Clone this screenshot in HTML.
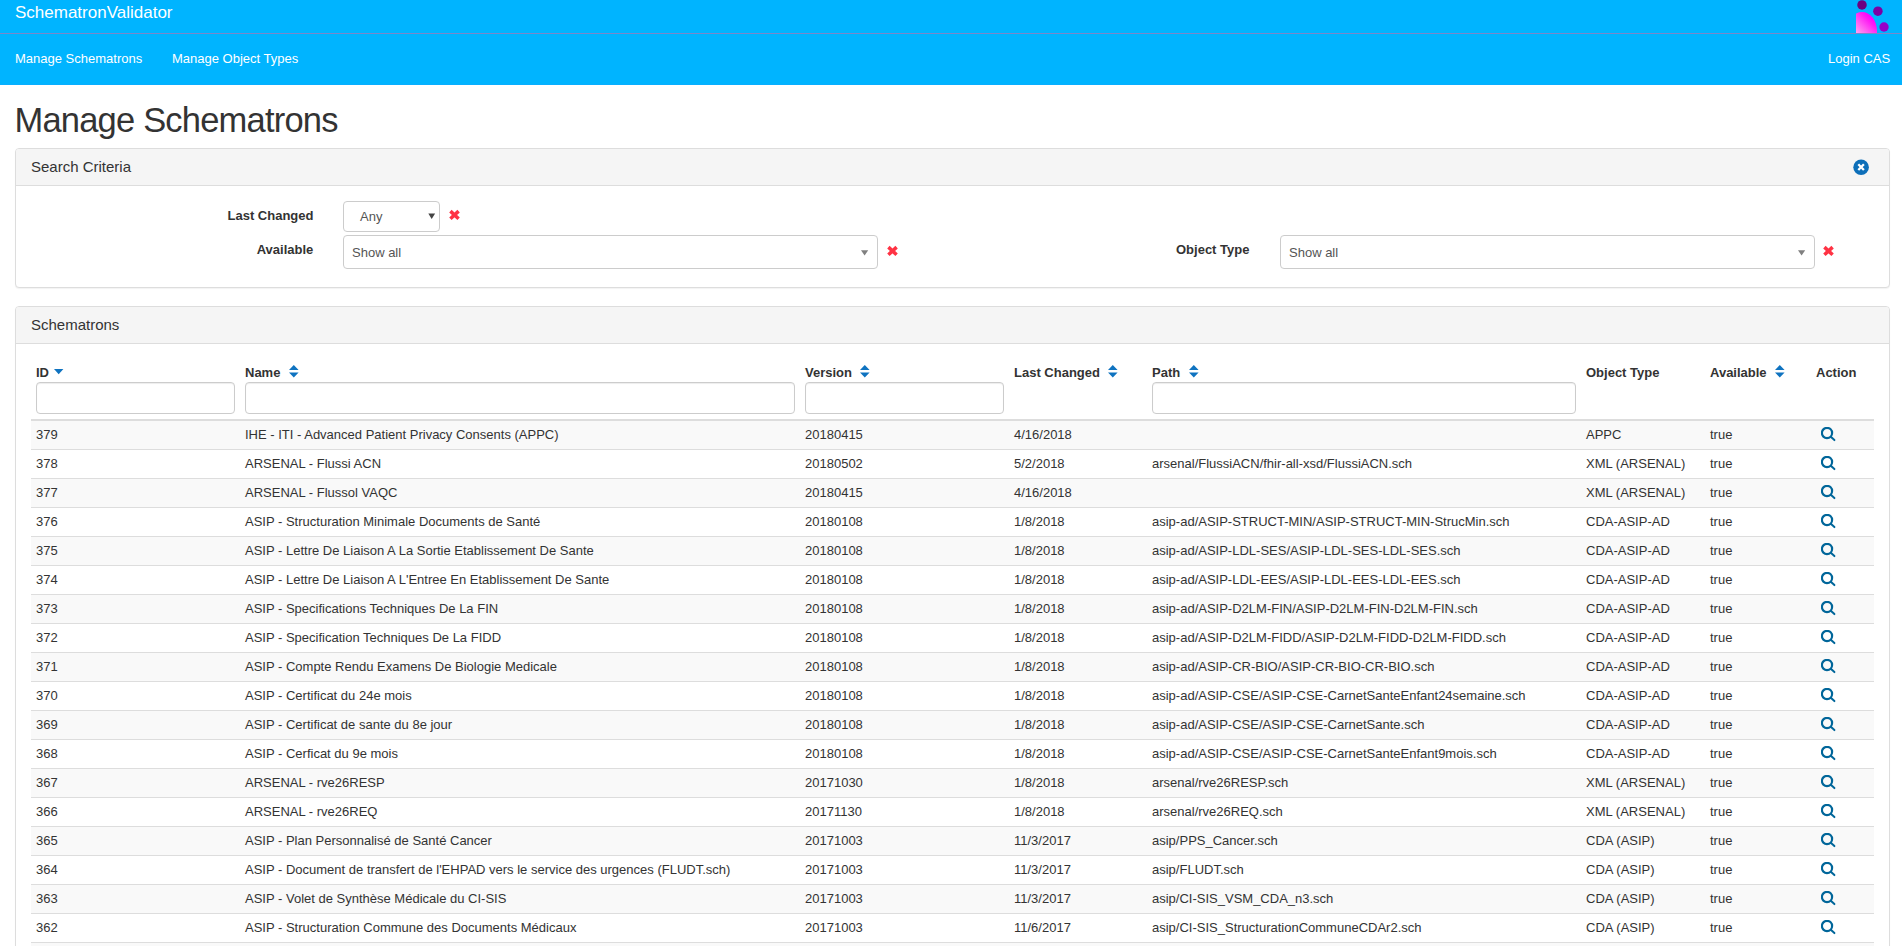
<!DOCTYPE html>
<html><head><meta charset="utf-8">
<style>
*{box-sizing:border-box;}
html,body{margin:0;padding:0;}
body{font-family:"Liberation Sans",sans-serif;font-size:13px;color:#333;background:#fff;width:1902px;height:946px;overflow:hidden;position:relative;}
.nav{position:absolute;left:0;top:0;width:1902px;height:85px;background:#00b4ff;}
.nav .dv{position:absolute;left:0;top:33px;width:1902px;height:1px;background:#7b87c9;}
.nav .bot{position:absolute;left:0;top:84px;width:1902px;height:1px;background:#0aaeff;}
.brand{position:absolute;left:15px;top:3px;font-size:17px;line-height:20px;color:#fff;}
.nl{position:absolute;top:50px;font-size:13px;line-height:18px;color:#fff;}
.logo{position:absolute;left:1846px;top:0;}
h1{position:absolute;left:14.5px;top:100px;margin:0;font-size:34.5px;letter-spacing:-0.8px;font-weight:normal;line-height:40px;color:#333;white-space:nowrap;}
.panel{position:absolute;left:15px;width:1875px;border:1px solid #ddd;border-radius:4px;background:#fff;box-shadow:0 1px 1px rgba(0,0,0,.05);}
.ph{height:37px;background:#f5f5f5;border-bottom:1px solid #ddd;border-radius:3px 3px 0 0;position:relative;}
.ph span{position:absolute;left:15px;top:9px;font-size:15px;line-height:18px;color:#333;}
.lbl{position:absolute;font-weight:bold;font-size:13px;line-height:18px;color:#333;text-align:right;white-space:nowrap;}
.sel{position:absolute;border:1px solid #ccc;border-radius:4px;background:#fff;}
.sel span{position:absolute;font-size:13px;line-height:18px;color:#555;}
.sel i{position:absolute;width:0;height:0;border-left:3.75px solid transparent;border-right:3.75px solid transparent;border-top:5.5px solid #808080;}
.redx{position:absolute;}
.th{position:absolute;top:364px;font-weight:bold;font-size:13px;line-height:18px;color:#333;white-space:nowrap;}
.inp{position:absolute;top:382px;height:32px;border:1px solid #ccc;border-radius:4px;background:#fff;box-shadow:inset 0 1px 1px rgba(0,0,0,.075);}
.thb{position:absolute;left:31px;top:419px;width:1843px;height:2px;background:#ddd;}
.tr{position:absolute;left:0;width:1902px;height:29px;}
.tr .bg{position:absolute;left:31px;top:0;width:1843px;height:28px;}
.tr .bd{position:absolute;left:31px;top:28px;width:1843px;height:1px;background:#ddd;}
.td{position:absolute;top:5px;font-size:13px;line-height:18px;color:#333;white-space:nowrap;}
.ic{position:absolute;top:6px;}
.srt{position:absolute;}
.sortd{position:absolute;width:0;height:0;border-left:4.75px solid transparent;border-right:4.75px solid transparent;border-top:5.5px solid #0f73c0;}
.sortu{position:absolute;width:0;height:0;border-left:4.75px solid transparent;border-right:4.75px solid transparent;border-bottom:5.2px solid #0f73c0;}
</style></head><body>
<div class="nav">
  <div class="brand">SchematronValidator</div>
  <div class="dv"></div>
  <div class="nl" style="left:15px">Manage Schematrons</div>
  <div class="nl" style="left:172px">Manage Object Types</div>
  <div class="nl" style="left:1828px">Login CAS</div>
  <div class="bot"></div>
  <svg class="logo" width="56" height="34" viewBox="0 0 56 34">
    <defs><linearGradient id="lg" gradientUnits="userSpaceOnUse" x1="10" y1="33" x2="25.5" y2="17.5"><stop offset="0" stop-color="#ffa4f0"/><stop offset="0.8" stop-color="#ff1cf4"/><stop offset="1" stop-color="#ff00ff"/></linearGradient><clipPath id="cp"><rect x="10" y="0" width="40" height="33"/></clipPath></defs>
    <ellipse cx="16" cy="31" rx="15" ry="19" fill="url(#lg)" clip-path="url(#cp)"/>
    <circle cx="16" cy="4.9" r="4.75" fill="#6c0080"/>
    <circle cx="31.9" cy="11.2" r="4.75" fill="#7c00a4"/>
    <circle cx="38" cy="27" r="4.7" fill="#9600c8"/>
  </svg>
</div>
<h1>Manage Schematrons</h1>

<div class="panel" style="top:148px;height:140px;">
  <div class="ph"><span>Search Criteria</span>
    <svg style="position:absolute;left:1837px;top:10.3px" width="16" height="16" viewBox="0 0 16 16"><circle cx="8.1" cy="8.2" r="7.8" fill="#0d6fb9"/><path d="M5.3 5.3 L10.9 11 M10.9 5.3 L5.3 11" stroke="#fff" stroke-width="2.3"/></svg>
  </div>
</div>
<div class="lbl" style="left:227.5px;top:207px;">Last Changed</div>
<div class="sel" style="left:343px;top:201px;width:97px;height:31px;"><span style="left:16px;top:6px">Any</span><svg style="position:absolute;left:84px;top:11px" width="8" height="7" viewBox="0 0 8 7"><path d="M0.3 0.6H7.1L3.7 6Z" fill="#444"/></svg></div>
<svg class="redx" style="left:448px;top:209px" width="13" height="12" viewBox="0 0 13 12"><path d="M2.4 2.1 L10.6 9.8 M10.6 2.1 L2.4 9.8" stroke="#ff3344" stroke-width="3.5"/></svg>

<div class="lbl" style="left:256.7px;top:241px;">Available</div>
<div class="sel" style="left:343px;top:235px;width:535px;height:34px;"><span style="left:8px;top:8px">Show all</span><svg style="position:absolute;left:517px;top:14px" width="8" height="7" viewBox="0 0 8 7"><path d="M0 0.3H7.2L3.6 5.4Z" fill="#808080"/></svg></div>
<svg class="redx" style="left:886px;top:245px" width="13" height="12" viewBox="0 0 13 12"><path d="M2.4 2.1 L10.6 9.8 M10.6 2.1 L2.4 9.8" stroke="#ff3344" stroke-width="3.5"/></svg>

<div class="lbl" style="left:1176px;top:241px;">Object Type</div>
<div class="sel" style="left:1280px;top:235px;width:535px;height:34px;"><span style="left:8px;top:8px">Show all</span><svg style="position:absolute;left:517px;top:14px" width="8" height="7" viewBox="0 0 8 7"><path d="M0 0.3H7.2L3.6 5.4Z" fill="#808080"/></svg></div>
<svg class="redx" style="left:1822px;top:245px" width="13" height="12" viewBox="0 0 13 12"><path d="M2.4 2.1 L10.6 9.8 M10.6 2.1 L2.4 9.8" stroke="#ff3344" stroke-width="3.5"/></svg>

<div class="panel" style="top:306px;height:700px;">
  <div class="ph"><span>Schematrons</span></div>
</div>

<div class="th" style="left:36px">ID</div>
<div class="th" style="left:245px">Name</div>
<div class="th" style="left:805px">Version</div>
<div class="th" style="left:1014px">Last Changed</div>
<div class="th" style="left:1152px">Path</div>
<div class="th" style="left:1586px">Object Type</div>
<div class="th" style="left:1710px">Available</div>
<div class="th" style="left:1816px">Action</div>
<div class="inp" style="left:36px;width:199px"></div>
<div class="inp" style="left:245px;width:550px"></div>
<div class="inp" style="left:805px;width:199px"></div>
<div class="inp" style="left:1152px;width:424px"></div>
<svg class="srt" style="left:53.8px;top:369px" width="10" height="6" viewBox="0 0 10 6"><path d="M0 0H9.4L4.7 5.2Z" fill="#0f73c0"/></svg>
<svg class="srt" style="left:288.8px;top:365px" width="10" height="13" viewBox="0 0 10 13"><path d="M0 5H9.6L4.8 0Z M0 7.6H9.6L4.8 12.5Z" fill="#0f73c0"/></svg>
<svg class="srt" style="left:860px;top:365px" width="10" height="13" viewBox="0 0 10 13"><path d="M0 5H9.6L4.8 0Z M0 7.6H9.6L4.8 12.5Z" fill="#0f73c0"/></svg>
<svg class="srt" style="left:1108.3px;top:365px" width="10" height="13" viewBox="0 0 10 13"><path d="M0 5H9.6L4.8 0Z M0 7.6H9.6L4.8 12.5Z" fill="#0f73c0"/></svg>
<svg class="srt" style="left:1188.6px;top:365px" width="10" height="13" viewBox="0 0 10 13"><path d="M0 5H9.6L4.8 0Z M0 7.6H9.6L4.8 12.5Z" fill="#0f73c0"/></svg>
<svg class="srt" style="left:1775px;top:365px" width="10" height="13" viewBox="0 0 10 13"><path d="M0 5H9.6L4.8 0Z M0 7.6H9.6L4.8 12.5Z" fill="#0f73c0"/></svg>
<div class="thb"></div>
<div class="tr" style="top:421px"><div class="bg" style="background:#f9f9f9"></div><div class="bd"></div><div class="td" style="left:36px">379</div><div class="td" style="left:245px">IHE - ITI - Advanced Patient Privacy Consents (APPC)</div><div class="td" style="left:805px">20180415</div><div class="td" style="left:1014px">4/16/2018</div><div class="td" style="left:1152px"></div><div class="td" style="left:1586px">APPC</div><div class="td" style="left:1710px">true</div><div class="ic" style="left:1821px"><svg width="16" height="16" viewBox="0 0 16 16"><circle cx="6" cy="6" r="5.1" fill="none" stroke="#00669a" stroke-width="2.2"/><path d="M9.8 9.8 L13.4 13.1" stroke="#00669a" stroke-width="2" stroke-linecap="round"/></svg></div></div>
<div class="tr" style="top:450px"><div class="bg" style="background:#fff"></div><div class="bd"></div><div class="td" style="left:36px">378</div><div class="td" style="left:245px">ARSENAL - Flussi ACN</div><div class="td" style="left:805px">20180502</div><div class="td" style="left:1014px">5/2/2018</div><div class="td" style="left:1152px">arsenal/FlussiACN/fhir-all-xsd/FlussiACN.sch</div><div class="td" style="left:1586px">XML (ARSENAL)</div><div class="td" style="left:1710px">true</div><div class="ic" style="left:1821px"><svg width="16" height="16" viewBox="0 0 16 16"><circle cx="6" cy="6" r="5.1" fill="none" stroke="#00669a" stroke-width="2.2"/><path d="M9.8 9.8 L13.4 13.1" stroke="#00669a" stroke-width="2" stroke-linecap="round"/></svg></div></div>
<div class="tr" style="top:479px"><div class="bg" style="background:#f9f9f9"></div><div class="bd"></div><div class="td" style="left:36px">377</div><div class="td" style="left:245px">ARSENAL - Flussol VAQC</div><div class="td" style="left:805px">20180415</div><div class="td" style="left:1014px">4/16/2018</div><div class="td" style="left:1152px"></div><div class="td" style="left:1586px">XML (ARSENAL)</div><div class="td" style="left:1710px">true</div><div class="ic" style="left:1821px"><svg width="16" height="16" viewBox="0 0 16 16"><circle cx="6" cy="6" r="5.1" fill="none" stroke="#00669a" stroke-width="2.2"/><path d="M9.8 9.8 L13.4 13.1" stroke="#00669a" stroke-width="2" stroke-linecap="round"/></svg></div></div>
<div class="tr" style="top:508px"><div class="bg" style="background:#fff"></div><div class="bd"></div><div class="td" style="left:36px">376</div><div class="td" style="left:245px">ASIP - Structuration Minimale Documents de Santé</div><div class="td" style="left:805px">20180108</div><div class="td" style="left:1014px">1/8/2018</div><div class="td" style="left:1152px">asip-ad/ASIP-STRUCT-MIN/ASIP-STRUCT-MIN-StrucMin.sch</div><div class="td" style="left:1586px">CDA-ASIP-AD</div><div class="td" style="left:1710px">true</div><div class="ic" style="left:1821px"><svg width="16" height="16" viewBox="0 0 16 16"><circle cx="6" cy="6" r="5.1" fill="none" stroke="#00669a" stroke-width="2.2"/><path d="M9.8 9.8 L13.4 13.1" stroke="#00669a" stroke-width="2" stroke-linecap="round"/></svg></div></div>
<div class="tr" style="top:537px"><div class="bg" style="background:#f9f9f9"></div><div class="bd"></div><div class="td" style="left:36px">375</div><div class="td" style="left:245px">ASIP - Lettre De Liaison A La Sortie Etablissement De Sante</div><div class="td" style="left:805px">20180108</div><div class="td" style="left:1014px">1/8/2018</div><div class="td" style="left:1152px">asip-ad/ASIP-LDL-SES/ASIP-LDL-SES-LDL-SES.sch</div><div class="td" style="left:1586px">CDA-ASIP-AD</div><div class="td" style="left:1710px">true</div><div class="ic" style="left:1821px"><svg width="16" height="16" viewBox="0 0 16 16"><circle cx="6" cy="6" r="5.1" fill="none" stroke="#00669a" stroke-width="2.2"/><path d="M9.8 9.8 L13.4 13.1" stroke="#00669a" stroke-width="2" stroke-linecap="round"/></svg></div></div>
<div class="tr" style="top:566px"><div class="bg" style="background:#fff"></div><div class="bd"></div><div class="td" style="left:36px">374</div><div class="td" style="left:245px">ASIP - Lettre De Liaison A L'Entree En Etablissement De Sante</div><div class="td" style="left:805px">20180108</div><div class="td" style="left:1014px">1/8/2018</div><div class="td" style="left:1152px">asip-ad/ASIP-LDL-EES/ASIP-LDL-EES-LDL-EES.sch</div><div class="td" style="left:1586px">CDA-ASIP-AD</div><div class="td" style="left:1710px">true</div><div class="ic" style="left:1821px"><svg width="16" height="16" viewBox="0 0 16 16"><circle cx="6" cy="6" r="5.1" fill="none" stroke="#00669a" stroke-width="2.2"/><path d="M9.8 9.8 L13.4 13.1" stroke="#00669a" stroke-width="2" stroke-linecap="round"/></svg></div></div>
<div class="tr" style="top:595px"><div class="bg" style="background:#f9f9f9"></div><div class="bd"></div><div class="td" style="left:36px">373</div><div class="td" style="left:245px">ASIP - Specifications Techniques De La FIN</div><div class="td" style="left:805px">20180108</div><div class="td" style="left:1014px">1/8/2018</div><div class="td" style="left:1152px">asip-ad/ASIP-D2LM-FIN/ASIP-D2LM-FIN-D2LM-FIN.sch</div><div class="td" style="left:1586px">CDA-ASIP-AD</div><div class="td" style="left:1710px">true</div><div class="ic" style="left:1821px"><svg width="16" height="16" viewBox="0 0 16 16"><circle cx="6" cy="6" r="5.1" fill="none" stroke="#00669a" stroke-width="2.2"/><path d="M9.8 9.8 L13.4 13.1" stroke="#00669a" stroke-width="2" stroke-linecap="round"/></svg></div></div>
<div class="tr" style="top:624px"><div class="bg" style="background:#fff"></div><div class="bd"></div><div class="td" style="left:36px">372</div><div class="td" style="left:245px">ASIP - Specification Techniques De La FIDD</div><div class="td" style="left:805px">20180108</div><div class="td" style="left:1014px">1/8/2018</div><div class="td" style="left:1152px">asip-ad/ASIP-D2LM-FIDD/ASIP-D2LM-FIDD-D2LM-FIDD.sch</div><div class="td" style="left:1586px">CDA-ASIP-AD</div><div class="td" style="left:1710px">true</div><div class="ic" style="left:1821px"><svg width="16" height="16" viewBox="0 0 16 16"><circle cx="6" cy="6" r="5.1" fill="none" stroke="#00669a" stroke-width="2.2"/><path d="M9.8 9.8 L13.4 13.1" stroke="#00669a" stroke-width="2" stroke-linecap="round"/></svg></div></div>
<div class="tr" style="top:653px"><div class="bg" style="background:#f9f9f9"></div><div class="bd"></div><div class="td" style="left:36px">371</div><div class="td" style="left:245px">ASIP - Compte Rendu Examens De Biologie Medicale</div><div class="td" style="left:805px">20180108</div><div class="td" style="left:1014px">1/8/2018</div><div class="td" style="left:1152px">asip-ad/ASIP-CR-BIO/ASIP-CR-BIO-CR-BIO.sch</div><div class="td" style="left:1586px">CDA-ASIP-AD</div><div class="td" style="left:1710px">true</div><div class="ic" style="left:1821px"><svg width="16" height="16" viewBox="0 0 16 16"><circle cx="6" cy="6" r="5.1" fill="none" stroke="#00669a" stroke-width="2.2"/><path d="M9.8 9.8 L13.4 13.1" stroke="#00669a" stroke-width="2" stroke-linecap="round"/></svg></div></div>
<div class="tr" style="top:682px"><div class="bg" style="background:#fff"></div><div class="bd"></div><div class="td" style="left:36px">370</div><div class="td" style="left:245px">ASIP - Certificat du 24e mois</div><div class="td" style="left:805px">20180108</div><div class="td" style="left:1014px">1/8/2018</div><div class="td" style="left:1152px">asip-ad/ASIP-CSE/ASIP-CSE-CarnetSanteEnfant24semaine.sch</div><div class="td" style="left:1586px">CDA-ASIP-AD</div><div class="td" style="left:1710px">true</div><div class="ic" style="left:1821px"><svg width="16" height="16" viewBox="0 0 16 16"><circle cx="6" cy="6" r="5.1" fill="none" stroke="#00669a" stroke-width="2.2"/><path d="M9.8 9.8 L13.4 13.1" stroke="#00669a" stroke-width="2" stroke-linecap="round"/></svg></div></div>
<div class="tr" style="top:711px"><div class="bg" style="background:#f9f9f9"></div><div class="bd"></div><div class="td" style="left:36px">369</div><div class="td" style="left:245px">ASIP - Certificat de sante du 8e jour</div><div class="td" style="left:805px">20180108</div><div class="td" style="left:1014px">1/8/2018</div><div class="td" style="left:1152px">asip-ad/ASIP-CSE/ASIP-CSE-CarnetSante.sch</div><div class="td" style="left:1586px">CDA-ASIP-AD</div><div class="td" style="left:1710px">true</div><div class="ic" style="left:1821px"><svg width="16" height="16" viewBox="0 0 16 16"><circle cx="6" cy="6" r="5.1" fill="none" stroke="#00669a" stroke-width="2.2"/><path d="M9.8 9.8 L13.4 13.1" stroke="#00669a" stroke-width="2" stroke-linecap="round"/></svg></div></div>
<div class="tr" style="top:740px"><div class="bg" style="background:#fff"></div><div class="bd"></div><div class="td" style="left:36px">368</div><div class="td" style="left:245px">ASIP - Cerficat du 9e mois</div><div class="td" style="left:805px">20180108</div><div class="td" style="left:1014px">1/8/2018</div><div class="td" style="left:1152px">asip-ad/ASIP-CSE/ASIP-CSE-CarnetSanteEnfant9mois.sch</div><div class="td" style="left:1586px">CDA-ASIP-AD</div><div class="td" style="left:1710px">true</div><div class="ic" style="left:1821px"><svg width="16" height="16" viewBox="0 0 16 16"><circle cx="6" cy="6" r="5.1" fill="none" stroke="#00669a" stroke-width="2.2"/><path d="M9.8 9.8 L13.4 13.1" stroke="#00669a" stroke-width="2" stroke-linecap="round"/></svg></div></div>
<div class="tr" style="top:769px"><div class="bg" style="background:#f9f9f9"></div><div class="bd"></div><div class="td" style="left:36px">367</div><div class="td" style="left:245px">ARSENAL - rve26RESP</div><div class="td" style="left:805px">20171030</div><div class="td" style="left:1014px">1/8/2018</div><div class="td" style="left:1152px">arsenal/rve26RESP.sch</div><div class="td" style="left:1586px">XML (ARSENAL)</div><div class="td" style="left:1710px">true</div><div class="ic" style="left:1821px"><svg width="16" height="16" viewBox="0 0 16 16"><circle cx="6" cy="6" r="5.1" fill="none" stroke="#00669a" stroke-width="2.2"/><path d="M9.8 9.8 L13.4 13.1" stroke="#00669a" stroke-width="2" stroke-linecap="round"/></svg></div></div>
<div class="tr" style="top:798px"><div class="bg" style="background:#fff"></div><div class="bd"></div><div class="td" style="left:36px">366</div><div class="td" style="left:245px">ARSENAL - rve26REQ</div><div class="td" style="left:805px">20171130</div><div class="td" style="left:1014px">1/8/2018</div><div class="td" style="left:1152px">arsenal/rve26REQ.sch</div><div class="td" style="left:1586px">XML (ARSENAL)</div><div class="td" style="left:1710px">true</div><div class="ic" style="left:1821px"><svg width="16" height="16" viewBox="0 0 16 16"><circle cx="6" cy="6" r="5.1" fill="none" stroke="#00669a" stroke-width="2.2"/><path d="M9.8 9.8 L13.4 13.1" stroke="#00669a" stroke-width="2" stroke-linecap="round"/></svg></div></div>
<div class="tr" style="top:827px"><div class="bg" style="background:#f9f9f9"></div><div class="bd"></div><div class="td" style="left:36px">365</div><div class="td" style="left:245px">ASIP - Plan Personnalisé de Santé Cancer</div><div class="td" style="left:805px">20171003</div><div class="td" style="left:1014px">11/3/2017</div><div class="td" style="left:1152px">asip/PPS_Cancer.sch</div><div class="td" style="left:1586px">CDA (ASIP)</div><div class="td" style="left:1710px">true</div><div class="ic" style="left:1821px"><svg width="16" height="16" viewBox="0 0 16 16"><circle cx="6" cy="6" r="5.1" fill="none" stroke="#00669a" stroke-width="2.2"/><path d="M9.8 9.8 L13.4 13.1" stroke="#00669a" stroke-width="2" stroke-linecap="round"/></svg></div></div>
<div class="tr" style="top:856px"><div class="bg" style="background:#fff"></div><div class="bd"></div><div class="td" style="left:36px">364</div><div class="td" style="left:245px">ASIP - Document de transfert de l'EHPAD vers le service des urgences (FLUDT.sch)</div><div class="td" style="left:805px">20171003</div><div class="td" style="left:1014px">11/3/2017</div><div class="td" style="left:1152px">asip/FLUDT.sch</div><div class="td" style="left:1586px">CDA (ASIP)</div><div class="td" style="left:1710px">true</div><div class="ic" style="left:1821px"><svg width="16" height="16" viewBox="0 0 16 16"><circle cx="6" cy="6" r="5.1" fill="none" stroke="#00669a" stroke-width="2.2"/><path d="M9.8 9.8 L13.4 13.1" stroke="#00669a" stroke-width="2" stroke-linecap="round"/></svg></div></div>
<div class="tr" style="top:885px"><div class="bg" style="background:#f9f9f9"></div><div class="bd"></div><div class="td" style="left:36px">363</div><div class="td" style="left:245px">ASIP - Volet de Synthèse Médicale du CI-SIS</div><div class="td" style="left:805px">20171003</div><div class="td" style="left:1014px">11/3/2017</div><div class="td" style="left:1152px">asip/CI-SIS_VSM_CDA_n3.sch</div><div class="td" style="left:1586px">CDA (ASIP)</div><div class="td" style="left:1710px">true</div><div class="ic" style="left:1821px"><svg width="16" height="16" viewBox="0 0 16 16"><circle cx="6" cy="6" r="5.1" fill="none" stroke="#00669a" stroke-width="2.2"/><path d="M9.8 9.8 L13.4 13.1" stroke="#00669a" stroke-width="2" stroke-linecap="round"/></svg></div></div>
<div class="tr" style="top:914px"><div class="bg" style="background:#fff"></div><div class="bd"></div><div class="td" style="left:36px">362</div><div class="td" style="left:245px">ASIP - Structuration Commune des Documents Médicaux</div><div class="td" style="left:805px">20171003</div><div class="td" style="left:1014px">11/6/2017</div><div class="td" style="left:1152px">asip/CI-SIS_StructurationCommuneCDAr2.sch</div><div class="td" style="left:1586px">CDA (ASIP)</div><div class="td" style="left:1710px">true</div><div class="ic" style="left:1821px"><svg width="16" height="16" viewBox="0 0 16 16"><circle cx="6" cy="6" r="5.1" fill="none" stroke="#00669a" stroke-width="2.2"/><path d="M9.8 9.8 L13.4 13.1" stroke="#00669a" stroke-width="2" stroke-linecap="round"/></svg></div></div>
<div class="tr" style="top:943px"><div class="bg" style="background:#f9f9f9"></div><div class="bd"></div><div class="td" style="left:36px">361</div><div class="td" style="left:245px"></div><div class="td" style="left:805px"></div><div class="td" style="left:1014px"></div><div class="td" style="left:1152px"></div><div class="td" style="left:1586px"></div><div class="td" style="left:1710px"></div></div>
</body></html>
